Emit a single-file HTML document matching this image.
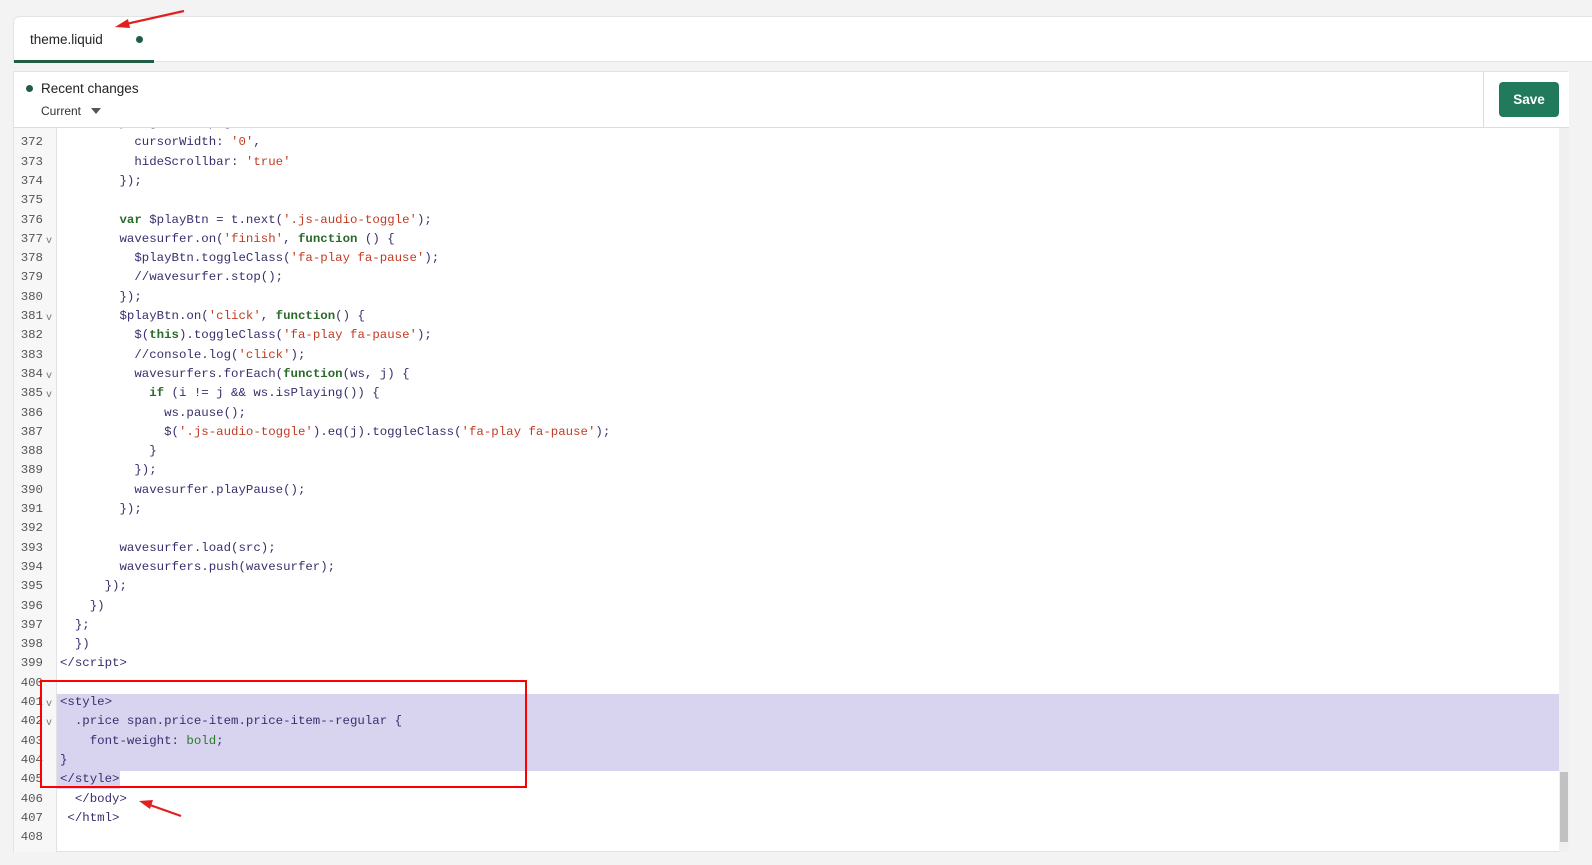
<!DOCTYPE html>
<html><head><meta charset="utf-8"><style>
body{margin:0;width:1592px;height:865px;background:#f3f3f3;position:relative;overflow:hidden;font-family:"Liberation Sans",sans-serif}
.tabbar{position:absolute;left:13px;top:16px;width:1579px;height:46px;background:#fff;border:1px solid #e3e3e3;border-right:none;border-radius:6px 0 0 0;box-sizing:border-box}
.tab{position:absolute;left:0;top:0;width:140px;height:46px;border-bottom:3px solid #1f5e45;box-sizing:border-box}
.tab span{position:absolute;left:16px;top:15px;font-size:13.5px;color:#222}
.dot{position:absolute;width:7px;height:7px;border-radius:50%;background:#1f5e45}
.ed{position:absolute;left:13px;top:71px;width:1555px;height:781px;background:#fff;border:1px solid #e3e3e3;box-sizing:border-box}
.hdr{position:absolute;left:0;top:0;width:1555px;height:56px;border-bottom:1px solid #dcdcdc;box-sizing:border-box;background:#fff;z-index:3}
.save{position:absolute;left:1485px;top:10px;width:60px;height:35px;background:#217a5c;border-radius:4px;color:#fff;font-weight:bold;font-size:13.5px;text-align:center;line-height:35px}
.gut{position:absolute;left:0;top:56px;width:42px;height:724px;background:#f7f7f7;border-right:1px solid #e2e2e2}
.code{position:absolute;left:0;top:0;width:1555px;height:780px;overflow:hidden;font-family:"Liberation Mono",monospace;font-size:12.4px}
.ln{position:absolute;left:0;width:29px;text-align:right;color:#555;height:19.3px;line-height:19.3px}
.tx{position:absolute;left:46px;white-space:pre;color:#3b2d6e;height:19.3px;line-height:19.3px}
.fd{position:absolute;left:32px;color:#777;font-size:10px;height:19.3px;line-height:23px}
.s{color:#c23b22}.k{color:#2a6a2a;font-weight:bold}.g{color:#2a7a2a}
.sel{position:absolute;background:#d8d4ef}
.sb{position:absolute;left:1545px;top:56px;width:10px;height:724px;background:#f0f0f0}
</style></head><body>
<div class="tabbar"><div class="tab"><span>theme.liquid</span></div><div class="dot" style="left:122px;top:19px"></div></div>
<div class="ed">
<div class="code">
<div class="gut"></div>
<div class="sel" style="left:43px;top:622px;width:1502px;height:77px"></div>
<div class="sel" style="left:43px;top:699px;width:63px;height:18px"></div>
<div id="lines"></div>
<div class="sb"></div>
<div style="position:absolute;left:1546px;top:700px;width:8px;height:70px;background:#c1c1c1"></div>
</div>
<div class="hdr"><div class="dot" style="left:12px;top:13px"></div>
<div style="position:absolute;left:27px;top:9px;font-size:13.5px;color:#222">Recent changes</div>
<div style="position:absolute;left:27px;top:32px;font-size:12px;color:#333">Current</div>
<div style="position:absolute;left:77px;top:36px;width:0;height:0;border-left:5px solid transparent;border-right:5px solid transparent;border-top:6px solid #555"></div>
<div style="position:absolute;left:1469px;top:0;width:1px;height:56px;background:#dcdcdc"></div>
<div class="save">Save</div></div>
</div>
<div style="position:absolute;left:40px;top:680px;width:487px;height:108px;border:2px solid #f00;box-sizing:border-box"></div>
<svg style="position:absolute;left:0;top:0" width="1592" height="865"><g stroke="#e02020" stroke-width="2.2" fill="#e02020">
<line x1="184" y1="11" x2="126" y2="24"/><polygon points="115,27 128,19 130,28" stroke="none"/>
<line x1="181" y1="816" x2="150" y2="805"/><polygon points="139,801 153,800 150,809" stroke="none"/></g></svg>
<script>
const L={371:'        pro gr s    p g   ss   ',372:'          cursorWidth: <s>\'0\'</s>,',373:'          hideScrollbar: <s>\'true\'</s>',374:'        });',375:'',
376:'        <k>var</k> $playBtn = t.next(<s>\'.js-audio-toggle\'</s>);',377:'        wavesurfer.on(<s>\'finish\'</s>, <k>function</k> () {',
378:'          $playBtn.toggleClass(<s>\'fa-play fa-pause\'</s>);',379:'          //wavesurfer.stop();',380:'        });',
381:'        $playBtn.on(<s>\'click\'</s>, <k>function</k>() {',382:'          $(<k>this</k>).toggleClass(<s>\'fa-play fa-pause\'</s>);',
383:'          //console.log(<s>\'click\'</s>);',384:'          wavesurfers.forEach(<k>function</k>(ws, j) {',385:'            <k>if</k> (i != j &amp;&amp; ws.isPlaying()) {',
386:'              ws.pause();',387:'              $(<s>\'.js-audio-toggle\'</s>).eq(j).toggleClass(<s>\'fa-play fa-pause\'</s>);',388:'            }',389:'          });',
390:'          wavesurfer.playPause();',391:'        });',392:'',393:'        wavesurfer.load(src);',394:'        wavesurfers.push(wavesurfer);',
395:'      });',396:'    })',397:'  };',398:'  })',399:'&lt;/script&gt;',400:'',401:'&lt;style&gt;',402:'  .price span.price-item.price-item--regular {',
403:'    font-weight: <g>bold</g>;',404:'}',405:'&lt;/style&gt;',406:'  &lt;/body&gt;',407:' &lt;/html&gt;',408:''};
const F=[377,381,384,385,401,402];let h='';
for(let i=371;i<=408;i++){const t=61.3+(i-372)*19.3;
if(i>371)h+=`<div class="ln" style="top:${t}px">${i}</div>`;
if(F.includes(i))h+=`<div class="fd" style="top:${t}px">v</div>`;
h+=`<div class="tx" style="top:${t}px">${L[i].replace(/<s>/g,'<span class="s">').replace(/<k>/g,'<span class="k">').replace(/<g>/g,'<span class="g">').replace(/<\/[skg]>/g,'</span>')}</div>`;}
document.getElementById('lines').innerHTML=h;
</script>
</body></html>
